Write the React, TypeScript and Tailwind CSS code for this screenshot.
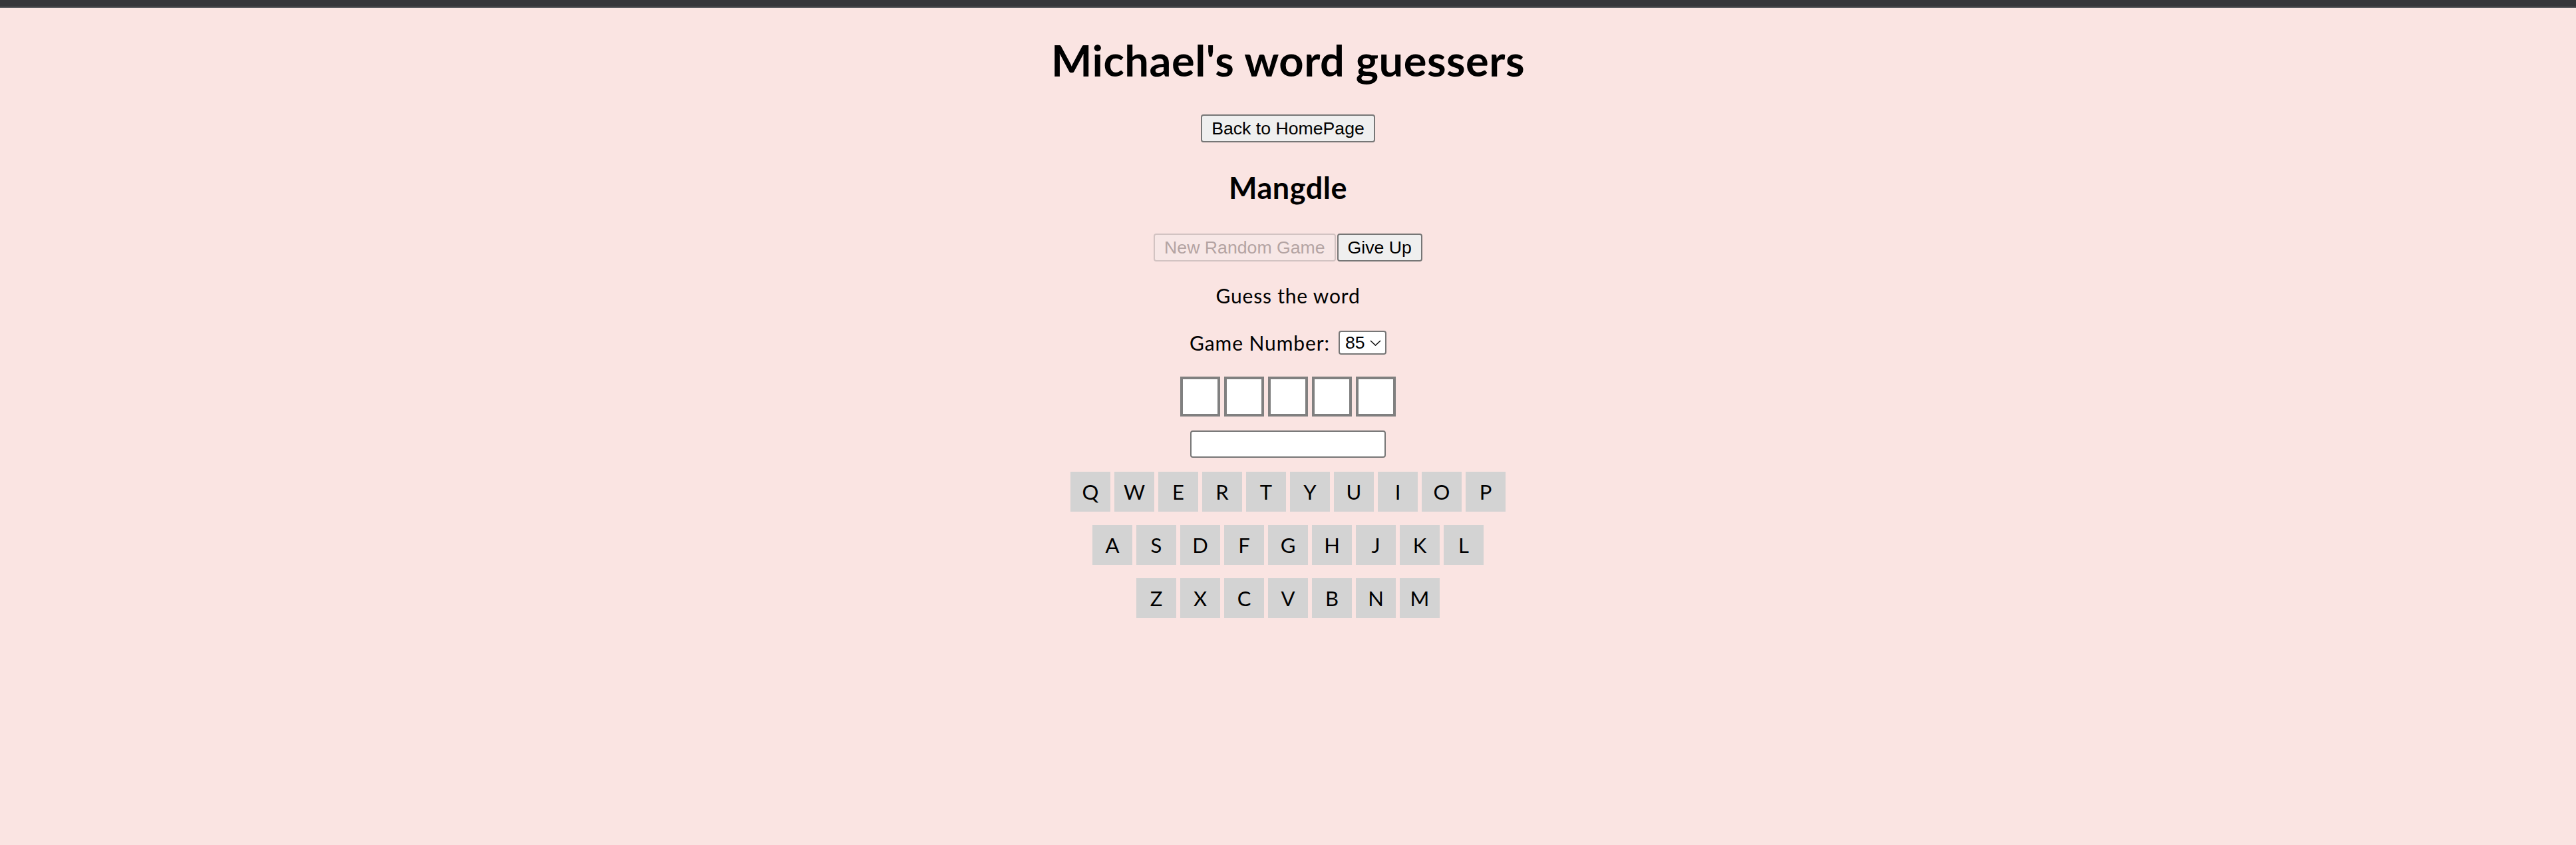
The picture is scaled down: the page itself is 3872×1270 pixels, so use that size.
import React, { useState } from 'react';

const keyRows = ['QWERTYUIOP', 'ASDFGHJKL', 'ZXCVBNM'];

const btn =
  "h-[42px] px-[14px] border-2 rounded-[4px] font-['Liberation_Sans',Arial,sans-serif] text-[26.67px] leading-none";

const App: React.FC = () => {
  const [gameNumber, setGameNumber] = useState('85');
  const [guess, setGuess] = useState('');

  return (
    <div className="min-h-screen bg-[#fae4e2] font-['Lato',sans-serif] text-black">
      {/* top strip */}
      <div className="h-[10px] bg-[#36363a]" />
      <div className="h-[2px] bg-[#5b5b5f]" />

      <div className="flex flex-col items-center">
        <h1 className="mt-[38px] h-[80px] text-[65px] leading-[80px] font-bold tracking-[0.5px]">
          Michael's word guessers
        </h1>

        <button className={`${btn} mt-[42px] border-[#767676] bg-[#efefef] text-black`}>
          Back to HomePage
        </button>

        <h2 className="mt-[38px] h-[60px] text-[45px] leading-[60px] font-bold tracking-[0.5px]">
          Mangdle
        </h2>

        <div className="mt-[39px] flex gap-[2px]">
          <button
            disabled
            className={`${btn} border-[#d2c3c2] bg-[#f7e7e6] text-[#b4a4a3]`}
          >
            New Random Game
          </button>
          <button className={`${btn} border-[#767676] bg-[#efefef] text-black`}>Give Up</button>
        </div>

        <p className="mt-[31px] h-[40px] text-[30px] leading-[40px] tracking-[0.8px]">
          Guess the word
        </p>

        <div className="mt-[33px] flex h-[36px] items-center">
          <span className="text-[30px] leading-[36px] tracking-[0.9px]">Game Number:</span>
          <div className="relative ml-[13px]">
            <select
              value={gameNumber}
              onChange={(e) => setGameNumber(e.target.value)}
              className="h-[36px] w-[72px] appearance-none rounded-[4px] border-2 border-[#767676] bg-white pl-[8px] font-['Liberation_Sans',Arial,sans-serif] text-[26.67px] leading-none outline-none"
            >
              {Array.from({ length: 85 }, (_, i) => String(85 - i)).map((n) => (
                <option key={n} value={n}>
                  {n}
                </option>
              ))}
            </select>
            <svg
              className="pointer-events-none absolute right-[8px] top-[14px]"
              width="17"
              height="9"
              viewBox="0 0 17 9"
              fill="none"
            >
              <path d="M1 1l7.5 7 7.5-7" stroke="#111" strokeWidth="1.6" />
            </svg>
          </div>
        </div>

        {/* letter boxes */}
        <div className="mt-[33px] flex gap-[6px]">
          {[0, 1, 2, 3, 4].map((i) => (
            <div key={i} className="h-[60px] w-[60px] border-4 border-[#808080] bg-white" />
          ))}
        </div>

        <input
          value={guess}
          onChange={(e) => setGuess(e.target.value)}
          className="mt-[21px] h-[41px] w-[294px] rounded-[4px] border-2 border-[#767676] bg-white px-2 outline-none"
        />

        {/* keyboard */}
        <div className="mt-[21px] flex flex-col gap-[20px]">
          {keyRows.map((row) => (
            <div key={row} className="flex justify-center gap-[6px]">
              {row.split('').map((k) => (
                <div
                  key={k}
                  className="flex h-[60px] w-[60px] items-center justify-center bg-[#d3d3d3] text-[31px]"
                >
                  {k}
                </div>
              ))}
            </div>
          ))}
        </div>
      </div>
    </div>
  );
};

export default App;
